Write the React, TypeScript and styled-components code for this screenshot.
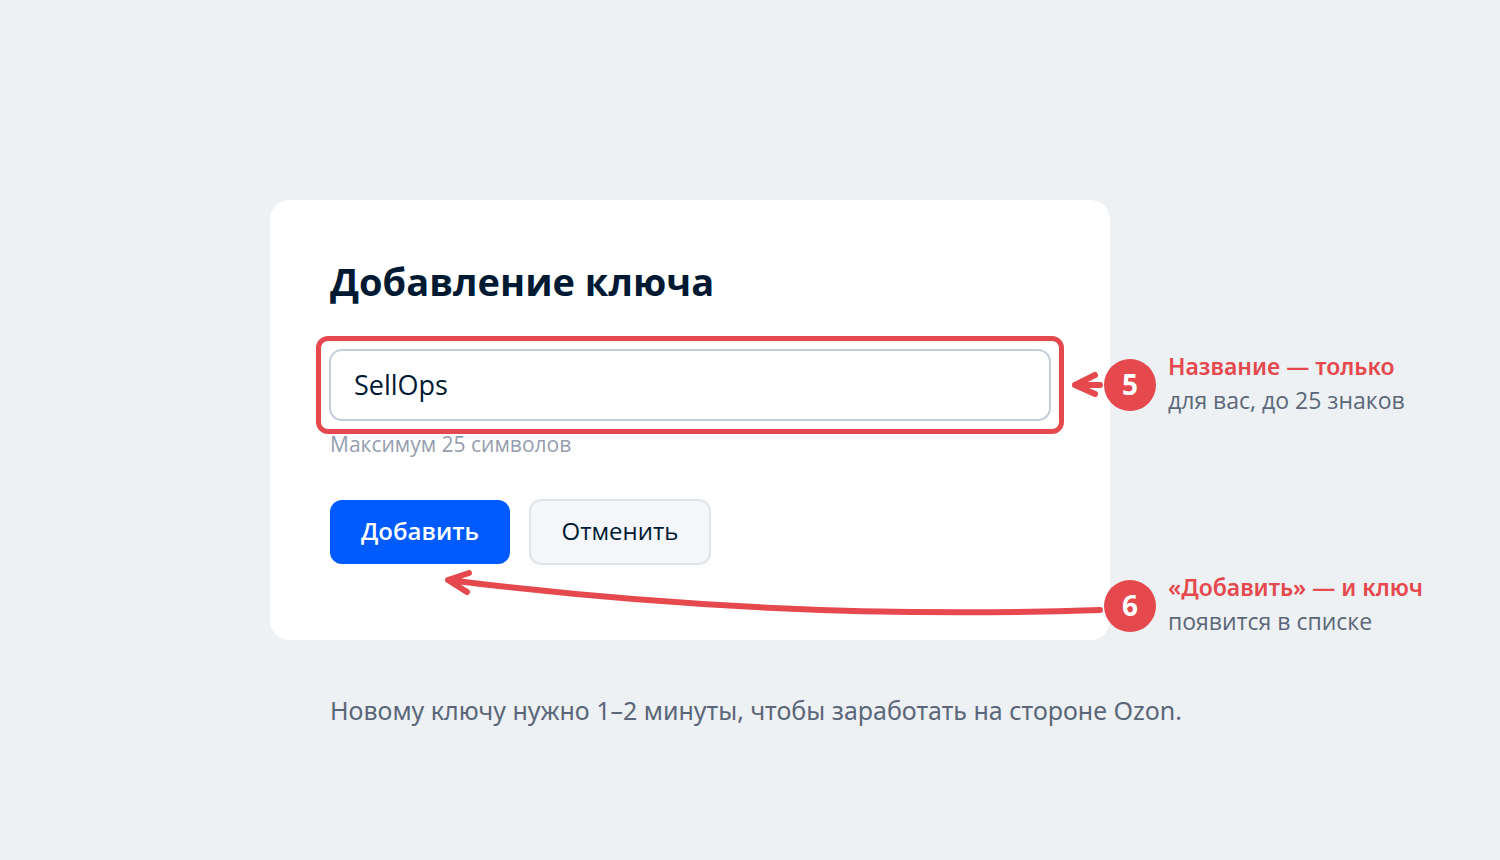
import React from "react";
import styled, { createGlobalStyle } from "styled-components";

const red = "#e5484d";
const ink = "#001a34";
const slate = "#5b6778";

const GlobalStyle = createGlobalStyle`
  *, *::before, *::after { box-sizing: border-box; }
  body {
    margin: 0;
    background: #edf1f4;
    font-family: "Open Sans", "Noto Sans", sans-serif;
    color: ${ink};
  }
`;

const Page = styled.main`
  min-height: 100vh;
  padding: 200px 18% 100px;
`;

const Card = styled.form`
  max-width: 840px;
  min-height: 440px;
  padding: 60px;
  border-radius: 20px;
  background: #fff;
`;

const Title = styled.h1`
  margin: 0 0 47px;
  font-size: 38px;
  line-height: 42px;
  font-weight: 700;
`;

const Field = styled.div`
  position: relative;
  margin: 0 -1px;
`;

const TextInput = styled.input`
  display: block;
  width: 100%;
  height: 72px;
  padding: 0 23px 2px;
  border: 2px solid #c4cedb;
  border-radius: 13px;
  background: #fff;
  color: ${ink};
  font: 400 27px/36px "Open Sans", "Noto Sans", sans-serif;
  outline: none;
`;

const Highlight = styled.div`
  position: absolute;
  inset: -13px;
  border: 5px solid ${red};
  border-radius: 12px;
  pointer-events: none;
`;

const Hint = styled.p`
  margin: 8px 0 40px;
  font-size: 21px;
  line-height: 30px;
  color: #959eae;
`;

const Actions = styled.div`
  position: relative;
  display: flex;
  align-items: center;
  gap: 19px;
`;

const Button = styled.button<{ $primary?: boolean }>`
  width: ${(p) => (p.$primary ? 180 : 182)}px;
  height: ${(p) => (p.$primary ? 64 : 66)}px;
  padding: 0 0 2px;
  border: ${(p) => (p.$primary ? "none" : "2px solid #e0e4ea")};
  border-radius: 12px;
  background: ${(p) => (p.$primary ? "#005bff" : "#f4f6fa")};
  color: ${(p) => (p.$primary ? "#fff" : ink)};
  font: ${(p) => (p.$primary ? 600 : 400)} 24px/34px "Open Sans", "Noto Sans", sans-serif;
  cursor: pointer;
`;

const Callout = styled.aside<{ $left: string; $top: number }>`
  position: absolute;
  left: ${(p) => p.$left};
  top: ${(p) => p.$top}px;
  display: flex;
  align-items: center;
  gap: 12px;
  height: 52px;
  white-space: nowrap;
`;

const Badge = styled.span`
  display: grid;
  place-items: center;
  width: 52px;
  height: 52px;
  padding-bottom: 2px;
  border-radius: 50%;
  background: ${red};
  color: #fff;
  font-size: 28px;
  line-height: 36px;
  font-weight: 700;
`;

const CalloutText = styled.p`
  margin: 0;
  padding-bottom: 4px;
  font-size: 23px;
  line-height: 34px;
  color: ${slate};
`;

const Lead = styled.strong`
  display: block;
  font-family: "Noto Sans", "Open Sans", sans-serif;
  font-weight: 600;
  color: ${red};
`;

const Arrow = styled.svg<{ $right: number; $top: number }>`
  position: absolute;
  right: ${(p) => p.$right}px;
  top: ${(p) => p.$top}px;
  fill: none;
  stroke: ${red};
  stroke-width: 6;
  stroke-linecap: round;
  stroke-linejoin: round;
  pointer-events: none;
`;

const Footnote = styled.p`
  max-width: 960px;
  margin: 52px 0 0;
  padding-left: 60px;
  font-family: "Noto Sans", "Open Sans", sans-serif;
  font-size: 25px;
  line-height: 36px;
  color: ${slate};
`;

export default function App() {
  return (
    <>
      <GlobalStyle />
      <Page>
        <Card onSubmit={(e) => e.preventDefault()}>
          <Title id="title">Добавление ключа</Title>
          <Field>
            <TextInput
              type="text"
              aria-labelledby="title"
              aria-describedby="hint"
              maxLength={25}
              defaultValue="SellOps"
            />
            <Highlight />
            <Arrow $right={-55} $top={21} width="36" height="30" viewBox="0 0 36 30" aria-hidden="true">
              <path d="M30 15H5M25 5L5 15L25 24" />
            </Arrow>
            <Callout $left="calc(100% + 53px)" $top={10}>
              <Badge>5</Badge>
              <CalloutText>
                <Lead>Название — только</Lead>
                для вас, до 25 знаков
              </CalloutText>
            </Callout>
          </Field>
          <Hint id="hint">Максимум 25 символов</Hint>
          <Actions>
            <Button type="submit" $primary>
              Добавить
            </Button>
            <Button type="button">Отменить</Button>
            <Arrow $right={-56} $top={66} width="666" height="56" viewBox="0 0 666 56" aria-hidden="true">
              <path d="M660 45Q334 56 8 15M29 8L8 15L27 27" />
            </Arrow>
            <Callout $left="calc(100% + 54px)" $top={81}>
              <Badge>6</Badge>
              <CalloutText>
                <Lead>«Добавить» — и ключ</Lead>
                появится в списке
              </CalloutText>
            </Callout>
          </Actions>
        </Card>
        <Footnote>Новому ключу нужно 1–2 минуты, чтобы заработать на стороне Ozon.</Footnote>
      </Page>
    </>
  );
}
